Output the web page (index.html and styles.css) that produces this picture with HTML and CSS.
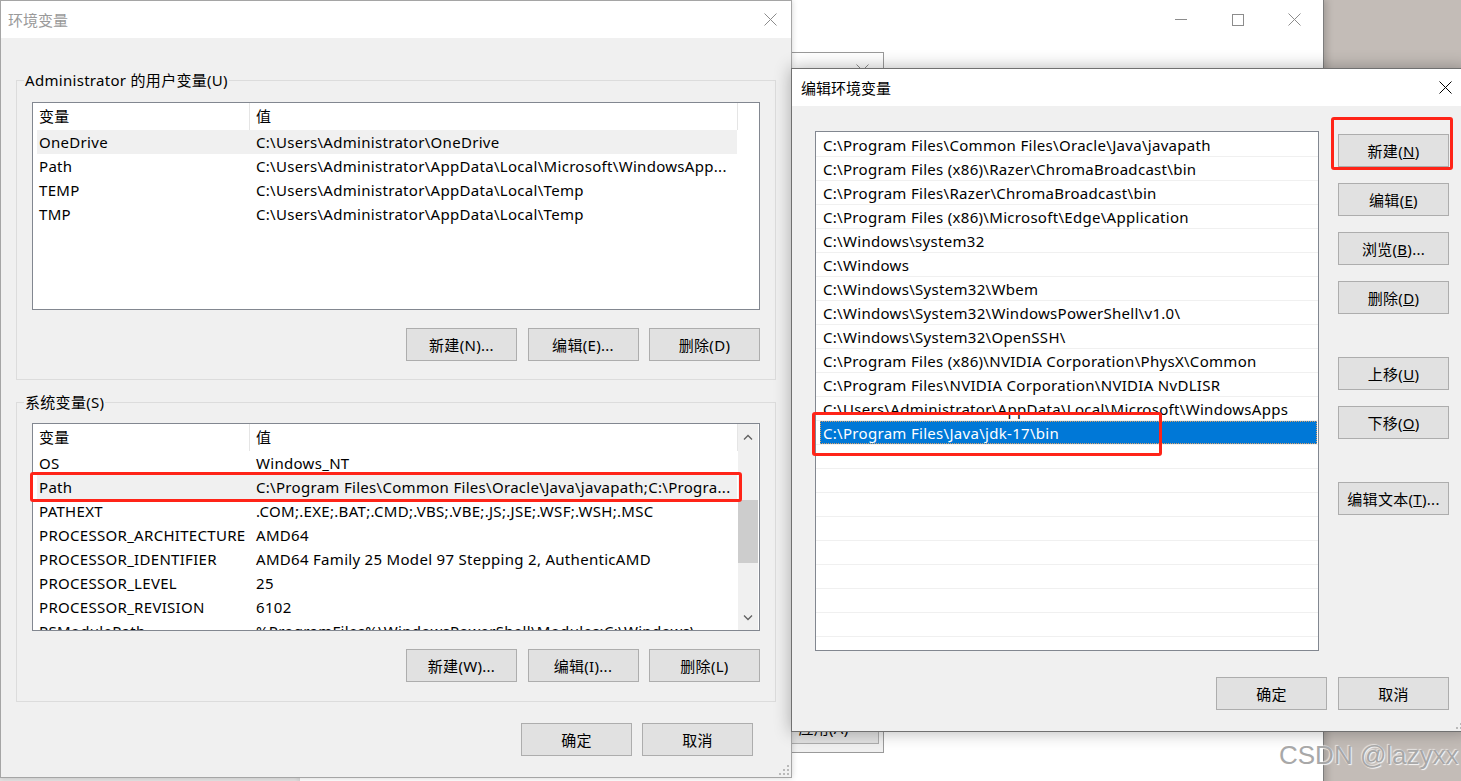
FILE: index.html
```html
<!DOCTYPE html>
<html lang="zh-CN">

<head>
    <meta charset="UTF-8">
    <meta name="viewport" content="width=device-width, initial-scale=1.0">
    <title>环境变量</title>
    <link rel="stylesheet" href="styles.css">
</head>

<body>
    <div class="desktop">
        <div class="window under-left"></div>

        <!-- 系统属性 (后面的窗口) -->
        <div class="window back-window">
            <div class="back-title">
                <span class="caption-btn">
                    <svg width="12" height="1" viewBox="0 0 12 1"><rect width="12" height="1" fill="#8c8c8c"/></svg>
                </span>
                <span class="caption-btn">
                    <svg width="12" height="12" viewBox="0 0 12 12"><rect x="0.5" y="0.5" width="11" height="11" fill="none" stroke="#8c8c8c"/></svg>
                </span>
                <span class="caption-btn">
                    <svg width="13" height="13" viewBox="0 0 13 13"><path d="M0.5 0.5L12.5 12.5M12.5 0.5L0.5 12.5" stroke="#8c8c8c"/></svg>
                </span>
            </div>
        </div>

        <div class="window mid-window">
            <div class="mid-title">
                <span class="mid-close">
                    <svg width="13" height="13" viewBox="0 0 13 13"><path d="M0.5 0.5L12.5 12.5M12.5 0.5L0.5 12.5" stroke="#8c8c8c"/></svg>
                </span>
            </div>
            <div class="mid-body">
                <button class="btn">应用(A)</button>
            </div>
        </div>

        <!-- 环境变量 -->
        <div class="window env-dialog">
            <div class="title-bar">
                <span class="title-text inactive">环境变量</span>
                <span class="title-close">
                    <svg width="13" height="13" viewBox="0 0 13 13"><path d="M0.5 0.5L12.5 12.5M12.5 0.5L0.5 12.5" stroke="#8c8c8c"/></svg>
                </span>
            </div>
            <div class="dialog-body">
                <fieldset class="group">
                    <legend>Administrator 的用户变量(U)</legend>
                    <div class="list-view">
                        <div class="lv-main">
                            <div class="lv-header">
                                <div class="col-name">变量</div>
                                <div class="col-value">值</div>
                            </div>
                            <div class="lv-row soft-sel">
                                <div class="col-name">OneDrive</div>
                                <div class="col-value">C:\Users\Administrator\OneDrive</div>
                            </div>
                            <div class="lv-row">
                                <div class="col-name">Path</div>
                                <div class="col-value">C:\Users\Administrator\AppData\Local\Microsoft\WindowsApp...</div>
                            </div>
                            <div class="lv-row">
                                <div class="col-name">TEMP</div>
                                <div class="col-value">C:\Users\Administrator\AppData\Local\Temp</div>
                            </div>
                            <div class="lv-row">
                                <div class="col-name">TMP</div>
                                <div class="col-value">C:\Users\Administrator\AppData\Local\Temp</div>
                            </div>
                        </div>
                    </div>
                    <div class="button-row">
                        <button class="btn">新建(N)...</button>
                        <button class="btn">编辑(E)...</button>
                        <button class="btn">删除(D)</button>
                    </div>
                </fieldset>

                <fieldset class="group second">
                    <legend>系统变量(S)</legend>
                    <div class="list-view">
                        <div class="lv-main">
                            <div class="lv-header">
                                <div class="col-name">变量</div>
                                <div class="col-value">值</div>
                            </div>
                            <div class="lv-row">
                                <div class="col-name">OS</div>
                                <div class="col-value">Windows_NT</div>
                            </div>
                            <div class="lv-row soft-sel">
                                <div class="col-name">Path</div>
                                <div class="col-value">C:\Program Files\Common Files\Oracle\Java\javapath;C:\Progra...</div>
                            </div>
                            <div class="lv-row">
                                <div class="col-name">PATHEXT</div>
                                <div class="col-value">.COM;.EXE;.BAT;.CMD;.VBS;.VBE;.JS;.JSE;.WSF;.WSH;.MSC</div>
                            </div>
                            <div class="lv-row">
                                <div class="col-name">PROCESSOR_ARCHITECTURE</div>
                                <div class="col-value">AMD64</div>
                            </div>
                            <div class="lv-row">
                                <div class="col-name">PROCESSOR_IDENTIFIER</div>
                                <div class="col-value">AMD64 Family 25 Model 97 Stepping 2, AuthenticAMD</div>
                            </div>
                            <div class="lv-row">
                                <div class="col-name">PROCESSOR_LEVEL</div>
                                <div class="col-value">25</div>
                            </div>
                            <div class="lv-row">
                                <div class="col-name">PROCESSOR_REVISION</div>
                                <div class="col-value">6102</div>
                            </div>
                            <div class="lv-row">
                                <div class="col-name">PSModulePath</div>
                                <div class="col-value">%ProgramFiles%\WindowsPowerShell\Modules;C:\Windows\...</div>
                            </div>
                        </div>
                        <div class="scrollbar">
                            <div class="scroll-arrow">
                                <svg width="10" height="6" viewBox="0 0 10 6"><polyline points="1,5.5 5,1.5 9,5.5" fill="none" stroke="#606060" stroke-width="1.3"/></svg>
                            </div>
                            <div class="scroll-track">
                                <div class="scroll-thumb"></div>
                            </div>
                            <div class="scroll-arrow">
                                <svg width="10" height="6" viewBox="0 0 10 6"><polyline points="1,0.5 5,4.5 9,0.5" fill="none" stroke="#606060" stroke-width="1.3"/></svg>
                            </div>
                        </div>
                    </div>
                    <div class="button-row">
                        <button class="btn">新建(W)...</button>
                        <button class="btn">编辑(I)...</button>
                        <button class="btn">删除(L)</button>
                    </div>
                </fieldset>

                <div class="footer-row">
                    <button class="btn">确定</button>
                    <button class="btn">取消</button>
                </div>
            </div>
            <svg class="grip" width="11" height="11" viewBox="0 0 11 11">
                <rect x="9" y="1" width="2" height="2" fill="#b9b9b9"/>
                <rect x="5" y="5" width="2" height="2" fill="#b9b9b9"/>
                <rect x="9" y="5" width="2" height="2" fill="#b9b9b9"/>
                <rect x="1" y="9" width="2" height="2" fill="#b9b9b9"/>
                <rect x="5" y="9" width="2" height="2" fill="#b9b9b9"/>
                <rect x="9" y="9" width="2" height="2" fill="#b9b9b9"/>
            </svg>
        </div>

        <!-- 编辑环境变量 -->
        <div class="window edit-dialog">
            <div class="edit-title">
                <span class="title-text">编辑环境变量</span>
                <span class="edit-close">
                    <svg width="13" height="13" viewBox="0 0 13 13"><path d="M0.5 0.5L12.5 12.5M12.5 0.5L0.5 12.5" stroke="#000"/></svg>
                </span>
            </div>
            <div class="edit-body">
                <div class="edit-main">
                    <div class="path-list">
                        <div class="path-row"><div class="path-text">C:\Program Files\Common Files\Oracle\Java\javapath</div></div>
                        <div class="path-row"><div class="path-text">C:\Program Files (x86)\Razer\ChromaBroadcast\bin</div></div>
                        <div class="path-row"><div class="path-text">C:\Program Files\Razer\ChromaBroadcast\bin</div></div>
                        <div class="path-row"><div class="path-text">C:\Program Files (x86)\Microsoft\Edge\Application</div></div>
                        <div class="path-row"><div class="path-text">C:\Windows\system32</div></div>
                        <div class="path-row"><div class="path-text">C:\Windows</div></div>
                        <div class="path-row"><div class="path-text">C:\Windows\System32\Wbem</div></div>
                        <div class="path-row"><div class="path-text">C:\Windows\System32\WindowsPowerShell\v1.0\</div></div>
                        <div class="path-row"><div class="path-text">C:\Windows\System32\OpenSSH\</div></div>
                        <div class="path-row"><div class="path-text">C:\Program Files (x86)\NVIDIA Corporation\PhysX\Common</div></div>
                        <div class="path-row"><div class="path-text">C:\Program Files\NVIDIA Corporation\NVIDIA NvDLISR</div></div>
                        <div class="path-row"><div class="path-text">C:\Users\Administrator\AppData\Local\Microsoft\WindowsApps</div></div>
                        <div class="path-row selected"><div class="path-text">C:\Program Files\Java\jdk-17\bin</div></div>
                        <div class="path-row"><div class="path-text"></div></div>
                        <div class="path-row"><div class="path-text"></div></div>
                        <div class="path-row"><div class="path-text"></div></div>
                        <div class="path-row"><div class="path-text"></div></div>
                        <div class="path-row"><div class="path-text"></div></div>
                        <div class="path-row"><div class="path-text"></div></div>
                        <div class="path-row"><div class="path-text"></div></div>
                        <div class="path-row"><div class="path-text"></div></div>
                        <div class="path-row"><div class="path-text"></div></div>
                    </div>
                    <div class="side-buttons">
                        <button class="btn">新建(<u>N</u>)</button>
                        <button class="btn">编辑(<u>E</u>)</button>
                        <button class="btn">浏览(<u>B</u>)...</button>
                        <button class="btn">删除(<u>D</u>)</button>
                        <button class="btn btn-gap">上移(<u>U</u>)</button>
                        <button class="btn">下移(<u>O</u>)</button>
                        <button class="btn btn-gap">编辑文本(<u>T</u>)...</button>
                    </div>
                </div>
                <div class="footer-row edit-footer">
                    <button class="btn">确定</button>
                    <button class="btn">取消</button>
                </div>
            </div>
            <svg class="grip" width="11" height="11" viewBox="0 0 11 11">
                <rect x="9" y="1" width="2" height="2" fill="#b9b9b9"/>
                <rect x="5" y="5" width="2" height="2" fill="#b9b9b9"/>
                <rect x="9" y="5" width="2" height="2" fill="#b9b9b9"/>
                <rect x="1" y="9" width="2" height="2" fill="#b9b9b9"/>
                <rect x="5" y="9" width="2" height="2" fill="#b9b9b9"/>
                <rect x="9" y="9" width="2" height="2" fill="#b9b9b9"/>
            </svg>
        </div>

        <!-- 红框标注 -->
        <div class="mark mark-path"></div>
        <div class="mark mark-jdk"></div>
        <div class="mark mark-new"></div>

        <div class="watermark">CSDN @lazyxx</div>
    </div>
</body>

</html>
```

FILE: styles.css
```css
/* 基本设置 */
* {
    box-sizing: border-box;
}

body {
    margin: 0;
    font-family: "Noto Sans", "Noto Sans CJK SC", sans-serif;
    font-size: 15px;
    letter-spacing: 0.3px;
    color: #000;
    background: #c3bcb7;
    overflow: hidden;
}

.desktop {
    position: relative;
    width: 1461px;
    height: 781px;
    overflow: hidden;
    background: #c3bcb7;
}

.window {
    position: absolute;
}

/* 后面的窗口 */
.under-left {
    left: 0;
    top: 0;
    width: 800px;
    height: 781px;
    background: #e4e4e4;
}

.back-window {
    left: 300px;
    top: -1px;
    width: 1024px;
    height: 790px;
    background: #fff;
    border-right: 1px solid #7d7d7d;
    box-shadow: 2px 0 8px rgba(0, 0, 0, 0.2);
}

.back-title {
    display: flex;
    justify-content: flex-end;
    height: 40px;
    padding-top: 1px;
}

.caption-btn {
    width: 57px;
    display: flex;
    align-items: center;
    justify-content: center;
}

.mid-window {
    left: 700px;
    top: 52px;
    width: 184px;
    height: 701px;
    border: 1px solid #9a9a9a;
    background: #f0f0f0;
    display: flex;
    flex-direction: column;
}

.mid-title {
    height: 34px;
    background: #fff;
    display: flex;
    justify-content: flex-end;
}

.mid-close {
    width: 42px;
    display: flex;
    align-items: center;
    justify-content: center;
}

.mid-body {
    flex: 1;
    display: flex;
    align-items: flex-end;
    justify-content: flex-end;
    padding: 0 4px 8px 0;
}

/* 环境变量 窗口 */
.env-dialog {
    left: 0;
    top: 0;
    width: 792px;
    height: 778px;
    border: 1px solid #a5a5a5;
    background: #f0f0f0;
    box-shadow: 0 0 6px rgba(0, 0, 0, 0.18);
}

.title-bar {
    height: 37px;
    background: #fff;
    display: flex;
    align-items: center;
    justify-content: space-between;
    padding-left: 7px;
}

.title-text {
    line-height: 20px;
    letter-spacing: 0;
}

.title-text.inactive {
    color: #9a9a9a;
}

.title-close {
    width: 42px;
    height: 37px;
    display: flex;
    align-items: center;
    justify-content: center;
}

.dialog-body {
    padding: 32px 15px 0;
}

.group {
    margin: 0;
    min-width: 0;
    border: 1px solid #dcdcdc;
    padding: 12px 15px 18px;
}

.group.second {
    margin-top: 12px;
    padding-top: 11px;
    padding-bottom: 19px;
}

legend {
    padding: 0 1px;
    margin-left: -8px;
    line-height: 20px;
}

.list-view {
    height: 208px;
    border: 1px solid #828790;
    background: #fff;
    display: flex;
    overflow: hidden;
    white-space: nowrap;
}

.lv-main {
    width: 705px;
}

.lv-header {
    display: flex;
    height: 27px;
    line-height: 27px;
}

.lv-header .col-name {
    width: 217px;
    padding-left: 6px;
    border-right: 1px solid #e5e5e5;
}

.lv-header .col-value {
    width: 488px;
    padding-left: 6px;
    border-right: 1px solid #e5e5e5;
}

.lv-row {
    display: flex;
    height: 24px;
    line-height: 24px;
    margin-left: 4px;
    width: 700px;
}

.lv-row .col-name {
    width: 213px;
    padding-left: 2px;
}

.lv-row .col-value {
    flex: 1;
    padding-left: 6px;
    overflow: hidden;
}

.lv-row.soft-sel {
    background: #f0f0f0;
}

.scrollbar {
    width: 20px;
    background: #f0f0f0;
    display: flex;
    flex-direction: column;
}

.scroll-arrow {
    height: 25px;
    display: flex;
    align-items: center;
    justify-content: center;
}

.scroll-track {
    flex: 1;
}

.scroll-thumb {
    margin-top: 51px;
    height: 63px;
    background: #cdcdcd;
}

/* 按钮 */
.btn {
    width: 111px;
    height: 33px;
    padding: 0;
    background: #e1e1e1;
    border: 1px solid #adadad;
    font: inherit;
    letter-spacing: inherit;
    color: #000;
}

.button-row {
    display: flex;
    justify-content: flex-end;
    gap: 10.5px;
    margin-top: 18px;
}

.footer-row {
    display: flex;
    justify-content: flex-end;
    gap: 10px;
    margin-top: 21px;
    padding-right: 23px;
}

.grip {
    position: absolute;
    right: 2px;
    bottom: 2px;
}

/* 编辑环境变量 窗口 */
.edit-dialog {
    left: 791px;
    top: 68px;
    width: 678px;
    height: 664px;
    border: 1px solid #707070;
    background: #f0f0f0;
    box-shadow: 0 0 16px rgba(0, 0, 0, 0.3);
}

.edit-title {
    height: 37px;
    background: #fff;
    display: flex;
    align-items: center;
    justify-content: space-between;
    padding-left: 9px;
}

.edit-close {
    width: 46px;
    height: 37px;
    display: flex;
    align-items: center;
    justify-content: center;
}

.edit-body {
    padding: 25px 19px 0 23px;
}

.edit-main {
    display: flex;
    gap: 19px;
}

.path-list {
    width: 504px;
    height: 520px;
    border: 1px solid #828790;
    background: #fff;
    padding-top: 1px;
    overflow: hidden;
}

.path-row {
    height: 24px;
    border-bottom: 1px solid #f0f0f0;
    padding: 0 1px 0 4px;
}

.path-text {
    height: 23px;
    line-height: 24px;
    padding-left: 3px;
    white-space: nowrap;
}

.path-row.selected .path-text {
    background: #0078d7;
    color: #fff;
    outline: 1px dotted #d9a06a;
    outline-offset: -1px;
}

.side-buttons {
    display: flex;
    flex-direction: column;
    gap: 16px;
    padding-top: 3px;
}

.side-buttons .btn-gap {
    margin-top: 27px;
}

.edit-footer {
    margin-top: 26px;
    gap: 11px;
    padding-right: 0;
}

/* 红框 */
.mark {
    position: absolute;
    border: 3px solid #ff2418;
    border-radius: 3px;
}

.mark-path {
    left: 30px;
    top: 472px;
    width: 712px;
    height: 30px;
}

.mark-jdk {
    left: 812px;
    top: 412px;
    width: 350px;
    height: 44px;
}

.mark-new {
    left: 1331px;
    top: 117px;
    width: 122px;
    height: 53px;
}

.watermark {
    position: absolute;
    left: 1279px;
    top: 742px;
    font-family: "Liberation Sans", Arial, sans-serif;
    font-size: 26px;
    line-height: 26px;
    letter-spacing: 0;
    color: #a8a8a8;
    text-shadow: 1px 1px 1px rgba(255, 255, 255, 0.9), -1px -1px 1px rgba(255, 255, 255, 0.6);
}
```
